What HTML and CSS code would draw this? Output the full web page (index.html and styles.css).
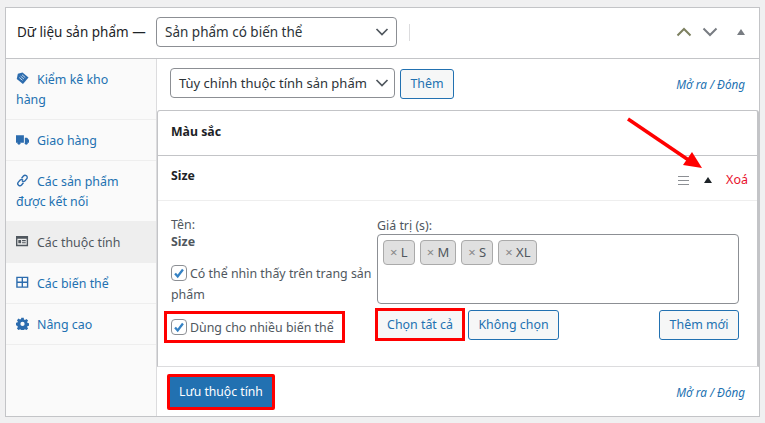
FILE: index.html
```html
<!DOCTYPE html>
<html lang="vi">
<head>
  <meta charset="UTF-8" />
  <title>Dữ liệu sản phẩm</title>
  <link rel="stylesheet" href="styles.css">
</head>
<body>
  <div class="panel">
    <div class="panel-head">
      <span class="panel-title">Dữ liệu sản phẩm —</span>
      <div class="select type-select">Sản phẩm có biến thể
        <svg class="caret" viewBox="0 0 14 8"><path d="M1.500 1l5.500 5.500L12.500 1" /></svg>
      </div>
      <span class="head-sep"></span>
      <div class="head-icons">
        <svg class="chev" viewBox="0 0 16 10"><path d="M1.500 8.500L8 2l6.500 6.500" /></svg>
        <svg class="chev" viewBox="0 0 16 10"><path d="M1.500 1.500L8 8l6.500-6.500" /></svg>
        <span class="tri tri-grey"></span>
      </div>
    </div>
    <div class="panel-body">
      <ul class="tabs">
        <li><a>
          <svg class="tab-icon" viewBox="0 0 14 14"><path d="M7 .5l6.500 5.500-6 7L.8 7.500 2 2z" /><path class="cut" d="M3.500 6l3.500 3M5 4.500l3.500 3M6.500 3l3.500 3" /></svg>Kiểm kê kho hàng</a></li>
        <li><a>
          <svg class="tab-icon" viewBox="0 0 14 14"><path d="M0 2.500h8.500v8H0zM9.500 5h2.500l2 2.500v3H9.500z" /><circle cx="3.200" cy="11" r="1.600" /><circle cx="11" cy="11" r="1.600" /></svg>Giao hàng</a></li>
        <li><a>
          <svg class="tab-icon stroke" viewBox="0 0 14 14"><path d="M6 4.500l2-2.300a2.200 2.200 0 0 1 3.500 3L9.500 7.500a2.200 2.200 0 0 1-3-.3M8 9.500l-2 2.300a2.200 2.200 0 0 1-3.500-3l2-2.300a2.200 2.200 0 0 1 3 .3" /></svg>Các sản phẩm được kết nối</a></li>
        <li class="active"><a>
          <svg class="tab-icon" viewBox="0 0 14 14"><path fill-rule="evenodd" d="M0 1h13v11H0zM1.500 4v6.500h10V4zM2.500 5.500h3v3.500h-3zM6.500 5.500h4v1.200h-4zM6.500 7.800h4V9h-4z" /></svg>Các thuộc tính</a></li>
        <li><a>
          <svg class="tab-icon stroke" viewBox="0 0 14 14"><path d="M1 1.500h11.500v10.500H1zM6.800 1.500v10.500M1 6.800h11.500" /></svg>Các biến thể</a></li>
        <li><a>
          <svg class="tab-icon" viewBox="0 0 14 14"><path fill-rule="evenodd" d="M5.700 .8h2.600l.3 1.800 1.100.5 1.500-1 1.800 1.800-1 1.500.5 1.100 1.800.3v2.600l-1.800.3-.5 1.100 1 1.500-1.800 1.800-1.500-1-1.100.5-.3 1.300H5.700l-.3-1.300-1.100-.5-1.500 1-1.800-1.800 1-1.500-.5-1.100L-.2 8.900V6.300l1.700-.3.500-1.100-1-1.500 1.800-1.800 1.500 1 1.100-.5zM7 5.200a2.300 2.300 0 1 0 0 4.600 2.300 2.300 0 0 0 0-4.600z" /></svg>Nâng cao</a></li>
      </ul>
      <div class="content">
        <div class="toolbar">
          <div class="select attr-select">Tùy chỉnh thuộc tính sản phẩm
            <svg class="caret" viewBox="0 0 14 8"><path d="M1.500 1l5.500 5.500L12.500 1" /></svg>
          </div>
          <button class="btn btn-add">Thêm</button>
          <span class="expand">Mở ra / Đóng</span>
        </div>
        <div class="attr-box">
          <div class="attr-row"><strong>Màu sắc</strong></div>
        </div>
        <div class="attr-box open">
          <div class="attr-row">
            <strong>Size</strong>
            <span class="row-tools">
              <span class="menu-icon"></span>
              <span class="tri"></span>
              <span class="remove">Xoá</span>
            </span>
          </div>
          <div class="attr-detail">
            <div class="col-left">
              <div class="name-label">Tên:</div>
              <div class="name-value">Size</div>
              <label class="check first">
                <span class="box"><svg viewBox="0 0 16 16"><path d="M3.500 8.500l3 3.500 6-8" /></svg></span>Có thể nhìn thấy trên trang sản phẩm
              </label>
              <label class="check flagged">
                <span class="box"><svg viewBox="0 0 16 16"><path d="M3.500 8.500l3 3.500 6-8" /></svg></span>Dùng cho nhiều biến thể
              </label>
            </div>
            <div class="col-right">
              <div class="name-label">Giá trị (s):</div>
              <div class="tag-box">
                <span class="tag"><i>×</i> L</span>
                <span class="tag"><i>×</i> M</span>
                <span class="tag"><i>×</i> S</span>
                <span class="tag"><i>×</i> XL</span>
              </div>
              <div class="tag-actions">
                <button class="btn btn-flagged">Chọn tất cả</button>
                <button class="btn btn-none">Không chọn</button>
                <button class="btn btn-new">Thêm mới</button>
              </div>
            </div>
          </div>
        </div>
        <div class="save-row">
          <button class="btn-primary">Lưu thuộc tính</button>
          <span class="expand">Mở ra / Đóng</span>
        </div>
      </div>
    </div>
  </div>
  <svg class="arrow" viewBox="0 0 80 60"><path d="M2 2L64 44" /><path class="head" d="M76 51L57 48l9-13z" /></svg>
</body>
</html>
```

FILE: styles.css
```css
* { box-sizing: border-box; }
html, body { height: 100%; }
body { margin: 0; background: #f0f0f1; color: #3c434a; font-family: "Noto Sans", Arial, sans-serif; font-size: 12.400px; line-height: 20px; overflow: hidden; position: relative; }

.panel { position: absolute; left: 5px; top: 7px; width: 755px; height: 410px; background: #fff; border: 1px solid #c3c4c7; display: flex; flex-direction: column; }

.panel-head { height: 51px; flex: none; display: flex; align-items: center; padding: 0 11px 2px; border-bottom: 1px solid #c3c4c7; }
.panel-title { color: #1d2327; font-size: 13.500px; width: 139px; white-space: nowrap; }
.select { border: 1px solid #8c8f94; border-radius: 4px; display: flex; align-items: center; justify-content: space-between; background: #fff; color: #2c3338; white-space: nowrap; }
.type-select { width: 241px; height: 30px; padding: 0 7px 0 8px; font-size: 13.500px; }
.caret { width: 14px; height: 8px; flex: none; }
.caret path { fill: none; stroke: #50575e; stroke-width: 1.700; }
.head-sep { width: 1px; height: 17px; background: #dcdcde; margin-left: 12px; }
.head-icons { margin-left: auto; display: flex; align-items: center; gap: 10px; padding-right: 3px; }
.chev { width: 16px; height: 10px; }
.chev path { fill: none; stroke: #787c82; stroke-width: 2; }
.chev:first-child path { stroke: #7d8060; }
.tri { width: 0; height: 0; border-left: 4.500px solid transparent; border-right: 4.500px solid transparent; border-bottom: 6px solid #1d2327; display: inline-block; }
.tri-grey { border-bottom-color: #787c82; margin-left: 9px; }

.panel-body { flex: 1; display: flex; min-height: 0; }

.tabs { list-style: none; margin: 0; padding: 0; width: 151px; flex: none; background: #fafafa; border-right: 1px solid #dcdcde; }
.tabs li { border-bottom: 1px solid #eee; }
.tabs a { display: block; padding: 11px 20px 9px 10px; color: #2271b1; line-height: 20px; }
.tabs .active { background: #eee; }
.tabs .active a { color: #50575e; }
.tab-icon { width: 13px; height: 13px; margin-right: 8px; fill: #2c6cae; vertical-align: -1px; }
.tab-icon .cut { fill: none; stroke: #fff; stroke-width: .8; }
.tab-icon.stroke { fill: none; stroke: #2c6cae; stroke-width: 1.500; }
.tabs .active .tab-icon { fill: #50575e; }

.content { flex: 1; min-width: 0; display: flex; flex-direction: column; }
.toolbar { height: 51px; flex: none; display: flex; align-items: flex-start; padding: 9px 14px 0 13px; }
.attr-select { width: 225px; height: 30px; padding: 0 5px 0 8px; font-size: 13px; }
.btn { height: 30px; padding: 0; border: 1px solid #2271b1; border-radius: 3px; background: #f6f7f7; color: #2271b1; font: inherit; white-space: nowrap; }
.btn-add { width: 54px; margin: 1px 0 0 5px; }
.expand { margin-left: auto; color: #2271b1; font-size: 11.700px; font-style: italic; padding-top: 6px; }

.attr-box { background: #fff; border: 1px solid #c3c4c7; border-right-width: 2px; border-bottom: 0; border-radius: 3px 3px 0 0; flex: none; }
.attr-row { height: 44px; display: flex; align-items: center; padding: 0 9px 2px 13px; color: #1d2327; font-size: 12.300px; }
.attr-row strong { font-weight: 700; }
.open { border-radius: 0; flex: 1; display: flex; flex-direction: column; border-bottom: 1px solid #dcdcde; }
.open .attr-row { border-bottom: 1px solid #eee; height: 45px; padding-bottom: 4px; }
.row-tools { margin: 8px 0 0 auto; display: flex; align-items: center; }
.menu-icon { width: 11px; height: 9px; border-top: 1px solid #8c8f94; border-bottom: 1px solid #8c8f94; position: relative; margin-right: 15px; }
.menu-icon::after { content: ""; position: absolute; left: 0; right: 0; top: 3px; height: 1px; background: #8c8f94; }
.remove { color: #e8112d; margin-left: 14px; font-size: 12.500px; }

.attr-detail { flex: 1; display: flex; padding: 14px 18px 0 13px; }
.col-left { width: 206px; flex: none; }
.name-label { line-height: 20px; color: #50575e; }
.name-value { font-weight: 700; line-height: 14px; color: #50575e; }
.check { display: block; color: #50575e; line-height: 21px; }
.check.first { margin-top: 14px; }
.check.flagged { margin: 6px 0 0 -7px; width: 181px; height: 32px; border: 3px solid #f00; padding: 3px 0 0 4px; white-space: nowrap; }
.box { display: inline-block; width: 16px; height: 16px; border: 1px solid #8c8f94; border-radius: 4px; background: #fff; margin-right: 3px; vertical-align: -3px; }
.box svg { display: block; width: 14px; height: 14px; }
.box path { fill: none; stroke: #3582c4; stroke-width: 2.600; }

.col-right { flex: 1; min-width: 0; padding-top: 1px; }
.tag-box { height: 70px; margin-top: -2px; border: 1px solid #8c8f94; border-radius: 4px; padding: 5px; display: flex; align-items: flex-start; gap: 5px; }
.tag { height: 25px; line-height: 23px; padding: 0 6px; background: #e0e0e0; border: 1px solid #aaa; border-radius: 4px; color: #50575e; white-space: nowrap; font-size: 13px; }
.tag i { font-style: normal; color: #888; }
.tag-actions { display: flex; align-items: flex-start; gap: 3px; margin-top: 6px; }
.btn-flagged { width: 90px; height: 33px; border: 3px solid #f00; border-radius: 0; margin: -2px 0 0 -2px; }
.btn-none { width: 91px; }
.btn-new { width: 80px; margin-left: auto; }

.save-row { height: 49px; flex: none; display: flex; align-items: center; padding: 0 14px 0 10px; }
.btn-primary { height: 36px; width: 108px; background: #2271b1; color: #fff; border: 3px solid #f00; border-radius: 2px; font: inherit; font-size: 12.200px; padding: 0; white-space: nowrap; }
.save-row .expand { padding-top: 0; }

.arrow { position: absolute; left: 626px; top: 117px; width: 80px; height: 60px; }
.arrow path { fill: none; stroke: #f00; stroke-width: 3.500; }
.arrow .head { fill: #f00; stroke: none; }
```
